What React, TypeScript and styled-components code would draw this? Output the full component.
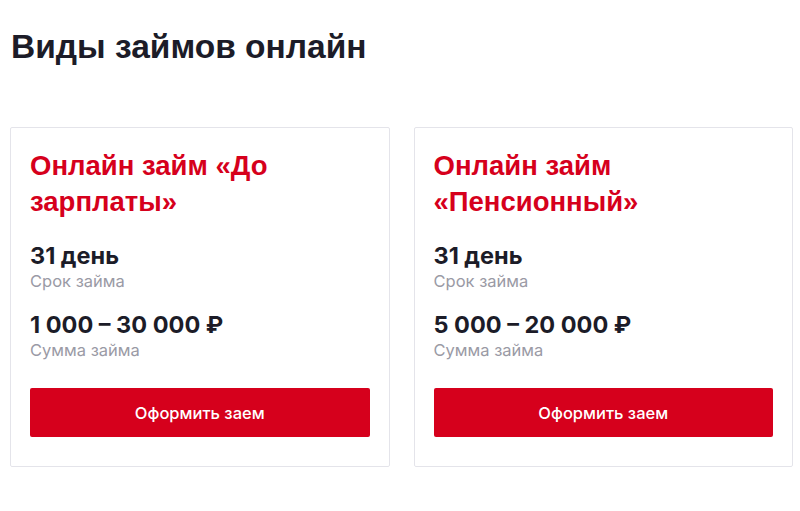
import React from "react";
import styled, { createGlobalStyle } from "styled-components";

const GlobalStyle = createGlobalStyle`
  html, body { margin: 0; padding: 0; background: #ffffff; }
  body { font-family: Inter, "Noto Sans", Roboto, sans-serif; color: #1c1c28; }
  * { box-sizing: border-box; }
`;

const Page = styled.main`
  padding: 27px 7px 0 10px;
`;

const Heading = styled.h1`
  margin: 0 0 60px 1px;
  font-family: "Liberation Sans", Arial, sans-serif;
  font-size: 33.5px;
  line-height: 40px;
  font-weight: 700;
  color: #1c1c28;
`;

const Grid = styled.div`
  display: grid;
  grid-template-columns: 1fr 1fr;
  gap: 24px;
`;

const Card = styled.article`
  border: 1px solid #e4e4ea;
  border-radius: 2px;
  padding: 20px 19px 29px 19px;
  display: flex;
  flex-direction: column;
`;

const CardTitle = styled.h2`
  margin: 0 0 21px 0;
  font-family: "Liberation Sans", Arial, sans-serif;
  font-size: 27.5px;
  line-height: 36px;
  font-weight: 700;
  color: #d6001c;
`;

const Stat = styled.div<{ $gap?: number }>`
  display: flex;
  flex-direction: column;
  margin-top: ${(p) => p.$gap ?? 0}px;
`;

const Value = styled.div`
  font-size: 23.5px;
  line-height: 30px;
  font-weight: 650;
  color: #1c1c28;
`;

const Label = styled.div`
  font-size: 16.5px;
  line-height: 22px;
  font-weight: 400;
  color: #9a9aa5;
  margin-top: -1px;
`;

const Button = styled.button`
  margin-top: 27px;
  height: 49px;
  width: 100%;
  border: none;
  border-radius: 2px;
  background: #d6001c;
  color: #ffffff;
  font-family: Inter, "Noto Sans", Roboto, sans-serif;
  font-size: 16.5px;
  font-weight: 500;
  cursor: pointer;
`;

const loans = [
  { title: "Онлайн займ «До зарплаты»", term: "31 день", amount: "1 000 – 30 000 ₽" },
  { title: "Онлайн займ «Пенсионный»", term: "31 день", amount: "5 000 – 20 000 ₽" },
];

export default function App() {
  return (
    <>
      <GlobalStyle />
      <Page>
        <Heading>Виды займов онлайн</Heading>
        <Grid>
          {loans.map((l) => (
            <Card key={l.title}>
              <CardTitle>{l.title}</CardTitle>
              <Stat>
                <Value>{l.term}</Value>
                <Label>Срок займа</Label>
              </Stat>
              <Stat $gap={18}>
                <Value>{l.amount}</Value>
                <Label>Сумма займа</Label>
              </Stat>
              <Button>Оформить заем</Button>
            </Card>
          ))}
        </Grid>
      </Page>
    </>
  );
}
